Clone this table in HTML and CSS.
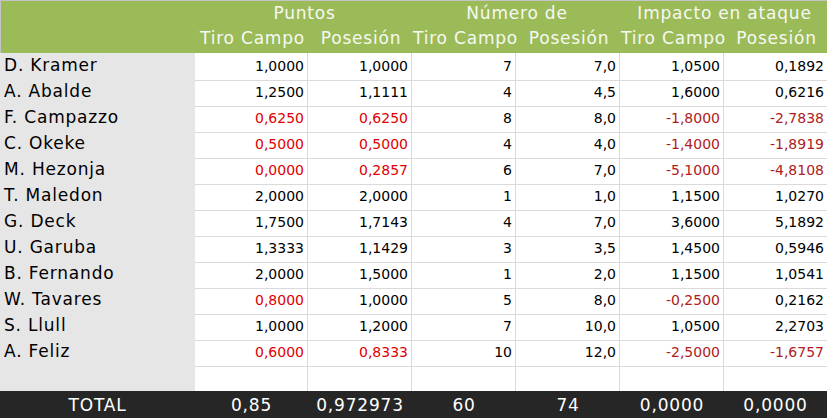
FILE: index.html
```html
<!DOCTYPE html>
<html lang="es">
<head>
<meta charset="utf-8">
<title>Estadísticas</title>
<link rel="stylesheet" href="styles.css">
</head>
<body>
<div class="sheet">
  <div class="head">
    <div class="row hrow1">
      <div class="hc"></div>
      <div class="hc span2">Puntos</div>
      <div class="hc span2">Número de</div>
      <div class="hc span2">Impacto en ataque</div>
    </div>
    <div class="row hrow2">
      <div class="hc"></div>
      <div class="hc">Tiro Campo</div>
      <div class="hc">Posesión</div>
      <div class="hc">Tiro Campo</div>
      <div class="hc">Posesión</div>
      <div class="hc">Tiro Campo</div>
      <div class="hc">Posesión</div>
    </div>
  </div>
  <div class="body">
    <div class="row"><div class="name">D. Kramer</div><div class="c">1,0000</div><div class="c">1,0000</div><div class="c">7</div><div class="c">7,0</div><div class="c">1,0500</div><div class="c">0,1892</div></div>
    <div class="row"><div class="name">A. Abalde</div><div class="c">1,2500</div><div class="c">1,1111</div><div class="c">4</div><div class="c">4,5</div><div class="c">1,6000</div><div class="c">0,6216</div></div>
    <div class="row"><div class="name">F. Campazzo</div><div class="c red">0,6250</div><div class="c red">0,6250</div><div class="c">8</div><div class="c">8,0</div><div class="c neg">-1,8000</div><div class="c neg">-2,7838</div></div>
    <div class="row"><div class="name">C. Okeke</div><div class="c red">0,5000</div><div class="c red">0,5000</div><div class="c">4</div><div class="c">4,0</div><div class="c neg">-1,4000</div><div class="c neg">-1,8919</div></div>
    <div class="row"><div class="name">M. Hezonja</div><div class="c red">0,0000</div><div class="c red">0,2857</div><div class="c">6</div><div class="c">7,0</div><div class="c neg">-5,1000</div><div class="c neg">-4,8108</div></div>
    <div class="row"><div class="name">T. Maledon</div><div class="c">2,0000</div><div class="c">2,0000</div><div class="c">1</div><div class="c">1,0</div><div class="c">1,1500</div><div class="c">1,0270</div></div>
    <div class="row"><div class="name">G. Deck</div><div class="c">1,7500</div><div class="c">1,7143</div><div class="c">4</div><div class="c">7,0</div><div class="c">3,6000</div><div class="c">5,1892</div></div>
    <div class="row"><div class="name">U. Garuba</div><div class="c">1,3333</div><div class="c">1,1429</div><div class="c">3</div><div class="c">3,5</div><div class="c">1,4500</div><div class="c">0,5946</div></div>
    <div class="row"><div class="name">B. Fernando</div><div class="c">2,0000</div><div class="c">1,5000</div><div class="c">1</div><div class="c">2,0</div><div class="c">1,1500</div><div class="c">1,0541</div></div>
    <div class="row"><div class="name">W. Tavares</div><div class="c red">0,8000</div><div class="c">1,0000</div><div class="c">5</div><div class="c">8,0</div><div class="c neg">-0,2500</div><div class="c">0,2162</div></div>
    <div class="row"><div class="name">S. Llull</div><div class="c">1,0000</div><div class="c">1,2000</div><div class="c">7</div><div class="c">10,0</div><div class="c">1,0500</div><div class="c">2,2703</div></div>
    <div class="row"><div class="name">A. Feliz</div><div class="c red">0,6000</div><div class="c red">0,8333</div><div class="c">10</div><div class="c">12,0</div><div class="c neg">-2,5000</div><div class="c neg">-1,6757</div></div>
    <div class="row empty"><div class="name"></div><div class="c"></div><div class="c"></div><div class="c"></div><div class="c"></div><div class="c"></div><div class="c"></div></div>
  </div>
  <div class="row total">
    <div class="tc">TOTAL</div>
    <div class="tc">0,85</div>
    <div class="tc">0,972973</div>
    <div class="tc">60</div>
    <div class="tc">74</div>
    <div class="tc">0,0000</div>
    <div class="tc">0,0000</div>
  </div>
</div>
</body>
</html>
```

FILE: styles.css
```css
* { box-sizing: border-box; }
html, body { margin: 0; padding: 0; background: #ffffff; }
body { font-family: "DejaVu Sans", Verdana, sans-serif; }

.sheet { width: 827px; height: 418px; overflow: hidden; }

.row {
  display: grid;
  grid-template-columns: 195px 113px 104px 104px 104px 104px 103px;
}

.head {
  background: #9bbb59;
  border-top: 1px solid #c4c4c4;
  border-left: 1px solid #c4c4c4;
  color: #f7f8f2;
  font-size: 17px;
  letter-spacing: 0.8px;
}
.hrow1 { height: 25px; }
.hrow2 { height: 27px; }
.hc {
  text-align: center;
  white-space: nowrap;
  line-height: 25px;
}
.hrow2 .hc { line-height: 24px; }
.hc.span2 { grid-column: span 2; }

.body .row { height: 26px; }
.name {
  background: #e7e6e6;
  font-size: 17px;
  letter-spacing: 0.8px;
  color: #000;
  padding-left: 4px;
  line-height: 24px;
  white-space: nowrap;
}
.c {
  border-right: 1px solid #dadada;
  border-bottom: 1px solid #dadada;
  font-size: 14px;
  color: #000;
  text-align: right;
  padding-right: 3px;
  line-height: 27px;
  white-space: nowrap;
}
.c:last-child { border-right: none; }
.empty .c { border-bottom: none; }
.red { color: #e00000; }
.neg { color: #b02020; }

.total {
  height: 28px;
  background: #262626;
  color: #ffffff;
  font-size: 17px;
  letter-spacing: 0.8px;
}
.tc {
  text-align: center;
  line-height: 28px;
  white-space: nowrap;
}
```
